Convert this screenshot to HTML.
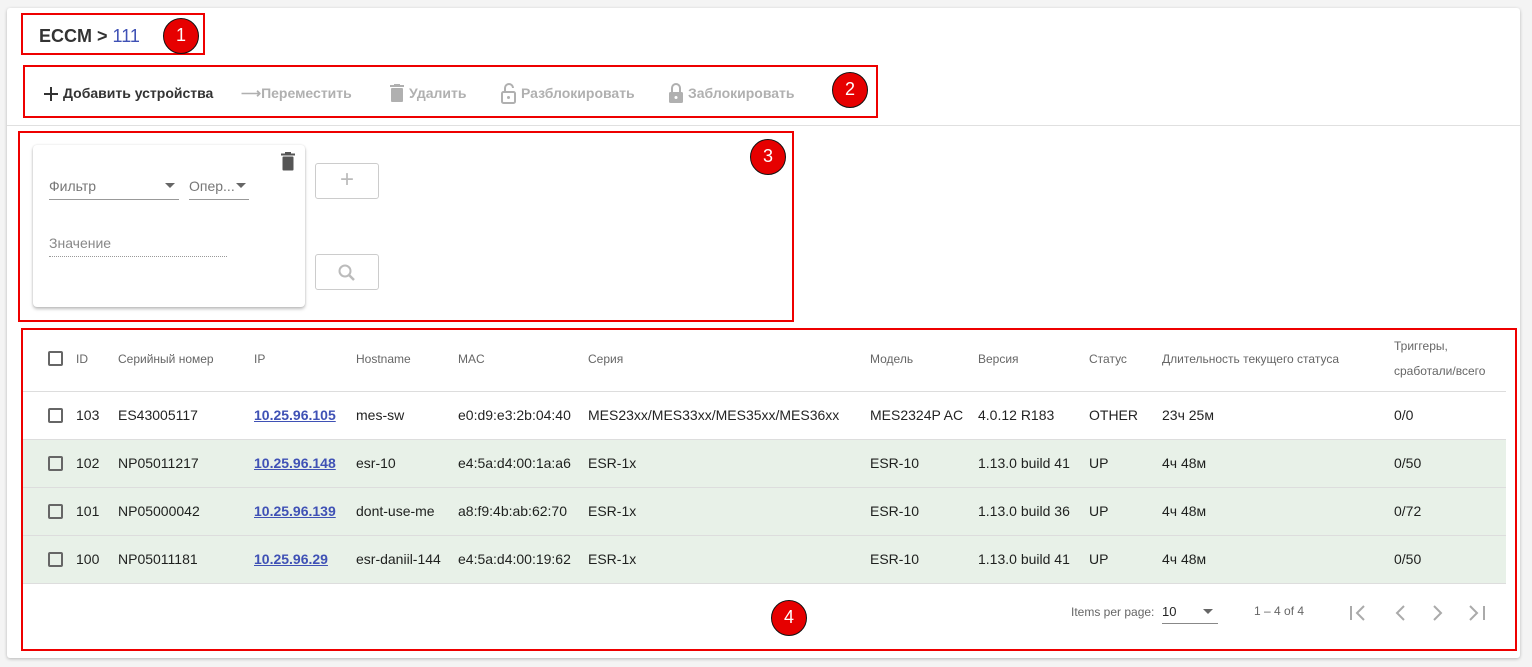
<!DOCTYPE html>
<html><head><meta charset="utf-8"><style>
*{box-sizing:border-box;margin:0;padding:0}
body{width:1532px;height:667px;background:#f4f4f4;font-family:"Liberation Sans",Arial,sans-serif;position:relative;overflow:hidden;color:rgba(0,0,0,.87)}
.a{position:absolute;white-space:nowrap}
.card{position:absolute;left:7px;top:8px;width:1513px;height:650px;background:#fff;box-shadow:0 1px 3px rgba(0,0,0,.25);border-radius:3px}
.rb{position:absolute;border:2px solid #e00}
.c{position:absolute;width:36px;height:36px;border-radius:50%;background:#e60000;border:1.5px solid #111;color:#fff;font-size:18px;text-align:center;line-height:33px}
.tb{font-size:14px;font-weight:bold;top:85px}
.dis{color:#b0b0b0}
.h{font-size:12px;color:#666;top:352px}
.r{font-size:14px}
.cb{position:absolute;left:48px;width:15px;height:15px;border:2px solid #666;border-radius:2px}
.lnk{color:#3f51b5;text-decoration:underline;font-weight:bold}
.g{position:absolute;left:23px;width:1483px;height:48px;background:#e8f1e8;border-top:1px solid #ddd}
</style></head><body>
<div class="card"></div>
<div class="a" style="left:39px;top:26px;font-size:18px;font-weight:bold;color:#333">ECCM &gt; <span style="color:#3f51b5;font-weight:normal">111</span></div>
<div class="rb" style="left:21px;top:13px;width:184px;height:42px"></div>
<div class="c" style="left:163px;top:18px">1</div>

<svg class="a" style="left:43px;top:86px" width="16" height="16" viewBox="0 0 16 16"><path d="M8 1v14M1 8h14" stroke="#333" stroke-width="2"/></svg>
<div class="a tb" style="left:63px;color:#333">Добавить устройства</div>
<div class="a tb dis" style="left:241px">⟶Переместить</div>
<svg class="a" style="left:389px;top:84px" width="16" height="18" viewBox="0 0 16 18"><rect x="1" y="1" width="14" height="2" fill="#b0b0b0"/><rect x="5" y="0" width="6" height="2" fill="#b0b0b0"/><rect x="2" y="4" width="12" height="14" rx="1" fill="#b0b0b0"/></svg>
<div class="a tb dis" style="left:409px">Удалить</div>
<svg class="a" style="left:500px;top:82px" width="18" height="22" viewBox="0 0 18 22"><path d="M5 10V6a4 4 0 0 1 8 0" fill="none" stroke="#b0b0b0" stroke-width="2"/><rect x="2" y="10" width="13" height="11" rx="1.5" fill="none" stroke="#b0b0b0" stroke-width="2"/><circle cx="8.5" cy="15.5" r="1.5" fill="#b0b0b0"/></svg>
<div class="a tb dis" style="left:521px">Разблокировать</div>
<svg class="a" style="left:667px;top:82px" width="18" height="22" viewBox="0 0 18 22"><path d="M5 10V6a4 4 0 0 1 8 0v4" fill="none" stroke="#b0b0b0" stroke-width="2"/><rect x="2" y="10" width="14" height="11" rx="1.5" fill="#b0b0b0"/><circle cx="9" cy="15.5" r="1.5" fill="#fff"/></svg>
<div class="a tb dis" style="left:688px">Заблокировать</div>
<div class="rb" style="left:23px;top:65px;width:855px;height:53px"></div>
<div class="c" style="left:832px;top:72px">2</div>
<div class="a" style="left:7px;top:125px;width:1513px;height:1px;background:#e0e0e0"></div>

<div class="a" style="left:33px;top:145px;width:272px;height:162px;background:#fff;border-radius:4px;box-shadow:0 2px 3px rgba(0,0,0,.25),0 0 2px rgba(0,0,0,.1)"></div>
<svg class="a" style="left:280px;top:152px" width="16" height="19" viewBox="0 0 16 19"><rect x="1" y="1.5" width="14" height="2" fill="#555"/><rect x="5" y="0" width="6" height="2" fill="#555"/><rect x="2.5" y="4.5" width="11" height="14" rx="1" fill="#555"/></svg>
<div class="a" style="left:49px;top:178px;font-size:14px;color:#777">Фильтр</div>
<div class="a" style="left:165px;top:183px;border-left:5px solid transparent;border-right:5px solid transparent;border-top:5px solid #666"></div>
<div class="a" style="left:49px;top:199px;width:130px;height:1px;background:#999"></div>
<div class="a" style="left:189px;top:178px;font-size:14px;color:#777">Опер...</div>
<div class="a" style="left:236px;top:183px;border-left:5px solid transparent;border-right:5px solid transparent;border-top:5px solid #666"></div>
<div class="a" style="left:189px;top:199px;width:60px;height:1px;background:#999"></div>
<div class="a" style="left:49px;top:235px;font-size:14px;color:#888">Значение</div>
<div class="a" style="left:49px;top:256px;width:178px;border-top:1px dotted #999"></div>
<div class="a" style="left:315px;top:163px;width:64px;height:36px;border:1px solid #ccc;border-radius:3px;text-align:center;color:#bbb;font-size:24px;line-height:32px">+</div>
<div class="a" style="left:315px;top:254px;width:64px;height:36px;border:1px solid #ccc;border-radius:3px"></div>
<svg class="a" style="left:337px;top:263px" width="20" height="20" viewBox="0 0 20 20"><circle cx="8" cy="8" r="5.5" fill="none" stroke="#bbb" stroke-width="2"/><path d="M12 12l5 5" stroke="#bbb" stroke-width="2.5"/></svg>
<div class="rb" style="left:18px;top:131px;width:776px;height:191px"></div>
<div class="c" style="left:750px;top:139px">3</div>

<div class="cb" style="top:351px"></div>
<div class="a h" style="left:76px">ID</div>
<div class="a h" style="left:118px">Серийный номер</div>
<div class="a h" style="left:254px">IP</div>
<div class="a h" style="left:356px">Hostname</div>
<div class="a h" style="left:458px">MAC</div>
<div class="a h" style="left:588px">Серия</div>
<div class="a h" style="left:870px">Модель</div>
<div class="a h" style="left:978px">Версия</div>
<div class="a h" style="left:1089px">Статус</div>
<div class="a h" style="left:1162px">Длительность текущего статуса</div>
<div class="a h" style="left:1394px;top:339px">Триггеры,</div>
<div class="a h" style="left:1394px;top:364px">сработали/всего</div>
<div class="a" style="left:23px;top:391px;width:1483px;height:1px;background:#ddd"></div>
<div class="g" style="top:439px"></div>
<div class="g" style="top:487px"></div>
<div class="g" style="top:535px;border-bottom:1px solid #ddd;height:49px"></div>

<div class="cb" style="top:408px"></div>
<div class="a r" style="left:76px;top:407px">103</div><div class="a r" style="left:118px;top:407px">ES43005117</div><div class="a r lnk" style="left:254px;top:407px">10.25.96.105</div><div class="a r" style="left:356px;top:407px">mes-sw</div><div class="a r" style="left:458px;top:407px">e0:d9:e3:2b:04:40</div><div class="a r" style="left:588px;top:407px">MES23xx/MES33xx/MES35xx/MES36xx</div><div class="a r" style="left:870px;top:407px">MES2324P AC</div><div class="a r" style="left:978px;top:407px">4.0.12 R183</div><div class="a r" style="left:1089px;top:407px">OTHER</div><div class="a r" style="left:1162px;top:407px">23ч 25м</div><div class="a r" style="left:1394px;top:407px">0/0</div>

<div class="cb" style="top:456px"></div>
<div class="a r" style="left:76px;top:455px">102</div><div class="a r" style="left:118px;top:455px">NP05011217</div><div class="a r lnk" style="left:254px;top:455px">10.25.96.148</div><div class="a r" style="left:356px;top:455px">esr-10</div><div class="a r" style="left:458px;top:455px">e4:5a:d4:00:1a:a6</div><div class="a r" style="left:588px;top:455px">ESR-1x</div><div class="a r" style="left:870px;top:455px">ESR-10</div><div class="a r" style="left:978px;top:455px">1.13.0 build 41</div><div class="a r" style="left:1089px;top:455px">UP</div><div class="a r" style="left:1162px;top:455px">4ч 48м</div><div class="a r" style="left:1394px;top:455px">0/50</div>

<div class="cb" style="top:504px"></div>
<div class="a r" style="left:76px;top:503px">101</div><div class="a r" style="left:118px;top:503px">NP05000042</div><div class="a r lnk" style="left:254px;top:503px">10.25.96.139</div><div class="a r" style="left:356px;top:503px">dont-use-me</div><div class="a r" style="left:458px;top:503px">a8:f9:4b:ab:62:70</div><div class="a r" style="left:588px;top:503px">ESR-1x</div><div class="a r" style="left:870px;top:503px">ESR-10</div><div class="a r" style="left:978px;top:503px">1.13.0 build 36</div><div class="a r" style="left:1089px;top:503px">UP</div><div class="a r" style="left:1162px;top:503px">4ч 48м</div><div class="a r" style="left:1394px;top:503px">0/72</div>

<div class="cb" style="top:552px"></div>
<div class="a r" style="left:76px;top:551px">100</div><div class="a r" style="left:118px;top:551px">NP05011181</div><div class="a r lnk" style="left:254px;top:551px">10.25.96.29</div><div class="a r" style="left:356px;top:551px">esr-daniil-144</div><div class="a r" style="left:458px;top:551px">e4:5a:d4:00:19:62</div><div class="a r" style="left:588px;top:551px">ESR-1x</div><div class="a r" style="left:870px;top:551px">ESR-10</div><div class="a r" style="left:978px;top:551px">1.13.0 build 41</div><div class="a r" style="left:1089px;top:551px">UP</div><div class="a r" style="left:1162px;top:551px">4ч 48м</div><div class="a r" style="left:1394px;top:551px">0/50</div>

<div class="a" style="left:1071px;top:605px;font-size:12px;color:#666">Items per page:</div>
<div class="a" style="left:1162px;top:604px;font-size:13px">10</div>
<div class="a" style="left:1203px;top:609px;border-left:5px solid transparent;border-right:5px solid transparent;border-top:5px solid #666"></div>
<div class="a" style="left:1162px;top:623px;width:56px;height:1px;background:#888"></div>
<div class="a" style="left:1254px;top:604px;font-size:12px;color:#666">1 – 4 of 4</div>
<svg class="a" style="left:1346px;top:602px" width="145" height="22" viewBox="0 0 145 22" fill="none" stroke="#aaa" stroke-width="2"><path d="M5 4v14M18 4l-7 7 7 7"/><path d="M58 4l-7 7 7 7"/><path d="M88 4l7 7-7 7"/><path d="M124 4l7 7-7 7M138 4v14"/></svg>
<div class="rb" style="left:21px;top:328px;width:1496px;height:323px"></div>
<div class="c" style="left:771px;top:600px">4</div>
</body></html>
